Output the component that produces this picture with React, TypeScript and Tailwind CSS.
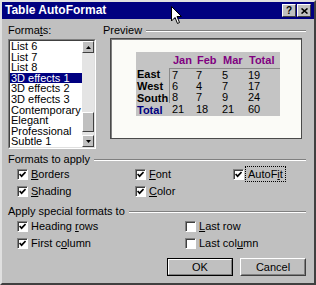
import React from "react";

const font = "font-['Liberation_Sans',Arial,sans-serif]";

const formats = [
  "List 6",
  "List 7",
  "List 8",
  "3D effects 1",
  "3D effects 2",
  "3D effects 3",
  "Contemporary",
  "Elegant",
  "Professional",
  "Subtle 1",
];

function Check({ checked }: { checked: boolean }) {
  return (
    <span className="w-[11px] h-[11px] shrink-0 flex items-center justify-center bg-white border border-t-[#808080] border-l-[#808080] border-r-white border-b-white shadow-[inset_1px_1px_0_#404040]">
      {checked && (
        <svg width="7" height="7" viewBox="0 0 7 7">
          <path d="M0.6 3 L2.6 5.2 L6.6 1" stroke="#000" strokeWidth="1.7" fill="none" />
        </svg>
      )}
    </span>
  );
}

function Option({ checked, children }: { checked: boolean; children: React.ReactNode }) {
  return (
    <div className="flex items-center gap-[3px] h-[17px]">
      <Check checked={checked} />
      <span className="leading-[13px]">{children}</span>
    </div>
  );
}

function GroupLabel({ children }: { children: React.ReactNode }) {
  return (
    <div className="flex items-center h-[13px] leading-[13px]">
      <span className="pr-[4px] whitespace-nowrap">{children}</span>
      <div className="flex-1 h-[2px] border-t border-t-[#808080] border-b border-b-white" />
    </div>
  );
}

function Arrow({ up }: { up?: boolean }) {
  return (
    <div className="h-[12px] flex items-center justify-center bg-[#c0c0c0] border border-t-white border-l-white border-r-[#404040] border-b-[#404040]">
      <svg width="5" height="3" viewBox="0 0 5 3">
        <path d={up ? "M2.5 0 L5 3 L0 3 Z" : "M0 0 L5 0 L2.5 3 Z"} fill="#000" />
      </svg>
    </div>
  );
}

const rows = [
  { name: "East", v: ["7", "7", "5", "19"] },
  { name: "West", v: ["6", "4", "7", "17"] },
  { name: "South", v: ["8", "7", "9", "24"] },
];

export default function App() {
  return (
    <div className={`${font} relative w-[316px] h-[285px] bg-[#c0c0c0] text-[11px] text-black border-2 border-t-[#e0e0e0] border-l-[#e0e0e0] border-r-[#404040] border-b-[#404040] overflow-hidden`}>
      {/* Title bar */}
      <div className="h-[17px] bg-[#000080] flex items-center pl-[3px] pr-[3px]">
        <span className="text-white font-bold text-[12px] leading-[13px] flex-1">Table AutoFormat</span>
        <div className="w-[14px] h-[13px] bg-[#c0c0c0] flex items-center justify-center border border-t-white border-l-white border-r-[#404040] border-b-[#404040] font-bold text-[10px] leading-none">
          ?
        </div>
        <div className="ml-[1px] w-[14px] h-[13px] bg-[#c0c0c0] flex items-center justify-center border border-t-white border-l-white border-r-[#404040] border-b-[#404040]">
          <svg width="7" height="6" viewBox="0 0 7 6">
            <path d="M0.5 0.5 L6.5 5.5 M6.5 0.5 L0.5 5.5" stroke="#000" strokeWidth="1.6" />
          </svg>
        </div>
      </div>

      <div className="pl-[6px] pr-[8px]">
        {/* Top section */}
        <div className="flex mt-[5px] gap-[7px]">
          <div className="w-[88px]">
            <div className="h-[13px] leading-[13px]">
              Forma<span className="underline">t</span>s:
            </div>
            <div className="mt-[2px] h-[110px] flex border border-t-[#808080] border-l-[#808080] border-r-white border-b-white">
              <div className="flex flex-1 border border-t-[#404040] border-l-[#404040] border-r-[#dfdfdf] border-b-[#dfdfdf]">
                <div className="flex-1 bg-white overflow-hidden">
                  {formats.map((f) => (
                    <div
                      key={f}
                      className={`h-[10.6px] leading-[10.6px] pl-[1px] whitespace-nowrap ${
                        f === "3D effects 1" ? "bg-[#000080] text-white" : ""
                      }`}
                    >
                      {f}
                    </div>
                  ))}
                </div>
                <div className="w-[12px] flex flex-col">
                  <Arrow up />
                  <div className="flex-1 bg-[#e4e4e4] pt-[59px]">
                    <div className="h-[20px] bg-[#c0c0c0] border border-t-white border-l-white border-r-[#404040] border-b-[#404040]" />
                  </div>
                  <Arrow />
                </div>
              </div>
            </div>
          </div>

          <div className="flex-1">
            <GroupLabel>Preview</GroupLabel>
            <div className="mt-[1px] ml-[7px] w-[192px] h-[101px] bg-[#fbfbf7] border border-[#4a4a4a] shadow-[inset_1px_1px_0_#808080] pl-[25px] pt-[13px]">
              <div className="w-[144px] bg-[#c4c4c4] text-[11px]">
                <div className="grid grid-cols-[34px_24px_26px_26px_34px] h-[16px] items-center font-bold text-[#800080]">
                  <span />
                  <span className="pl-[3px]">Jan</span>
                  <span className="pl-[3px]">Feb</span>
                  <span className="pl-[3px]">Mar</span>
                  <span className="pl-[3px]">Total</span>
                </div>
                <div className="flex">
                  <div className="w-[34px]">
                    {rows.map((r) => (
                      <div key={r.name} className="h-[12px] leading-[12px] pl-[1px] font-bold">
                        {r.name}
                      </div>
                    ))}
                    <div className="h-[12px] leading-[12px] pl-[1px] font-bold text-[#000080]">Total</div>
                  </div>
                  <div className="flex-1">
                    <div className="border-t border-l border-[#8a8a8a]">
                      {rows.map((r) => (
                        <div key={r.name} className="grid grid-cols-[24px_26px_26px_34px] h-[12px] leading-[12px] -mt-[1px] first:mt-0">
                          {r.v.map((v, i) => (
                            <span key={i} className="pl-[2px]">
                              {v}
                            </span>
                          ))}
                        </div>
                      ))}
                    </div>
                    <div className="grid grid-cols-[24px_26px_26px_34px] h-[12px] leading-[12px]">
                      {["21", "18", "21", "60"].map((v, i) => (
                        <span key={i} className="pl-[3px]">
                          {v}
                        </span>
                      ))}
                    </div>
                  </div>
                </div>
              </div>
            </div>
          </div>
        </div>

        {/* Formats to apply */}
        <div className="mt-[4px]">
          <GroupLabel>Formats to apply</GroupLabel>
        </div>
        <div className="grid grid-cols-[118px_98px_1fr] pl-[9px]">
          <Option checked>
            <span className="underline">B</span>orders
          </Option>
          <Option checked>
            <span className="underline">F</span>ont
          </Option>
          <Option checked>
            <span className="outline-1 outline-dotted outline-black outline-offset-[1px] px-[1px]">
              AutoF<span className="underline">i</span>t
            </span>
          </Option>
          <Option checked>
            <span className="underline">S</span>hading
          </Option>
          <Option checked>
            <span className="underline">C</span>olor
          </Option>
        </div>

        {/* Apply special formats to */}
        <div className="mt-[5px]">
          <GroupLabel>Apply special formats to</GroupLabel>
        </div>
        <div className="grid grid-cols-[168px_1fr] pl-[9px]">
          <Option checked>
            Heading <span className="underline">r</span>ows
          </Option>
          <Option checked={false}>
            <span className="underline">L</span>ast row
          </Option>
          <Option checked>
            First c<span className="underline">o</span>lumn
          </Option>
          <Option checked={false}>
            Last col<span className="underline">u</span>mn
          </Option>
        </div>

        {/* Buttons */}
        <div className="flex mt-[6px] ml-[159px]">
          <div className="w-[67px] h-[18px] border border-black">
            <div className="h-full flex items-center justify-center border border-t-white border-l-white border-r-[#808080] border-b-[#808080]">
              OK
            </div>
          </div>
          <div className="ml-[7px] w-[67px] h-[18px] border border-t-white border-l-white border-r-[#404040] border-b-[#404040]">
            <div className="h-full flex items-center justify-center border border-transparent border-r-[#808080] border-b-[#808080]">
              Cancel
            </div>
          </div>
        </div>
      </div>

      {/* Mouse pointer */}
      <svg className="absolute left-[169px] top-[4px]" width="12" height="19" viewBox="0 0 12 19">
        <path d="M0.5 0.5 L0.5 15 L4 11.5 L6.5 17.5 L8.5 16.5 L6 10.5 L10.5 10.5 Z" fill="#fff" stroke="#000" strokeWidth="1" />
      </svg>
    </div>
  );
}
